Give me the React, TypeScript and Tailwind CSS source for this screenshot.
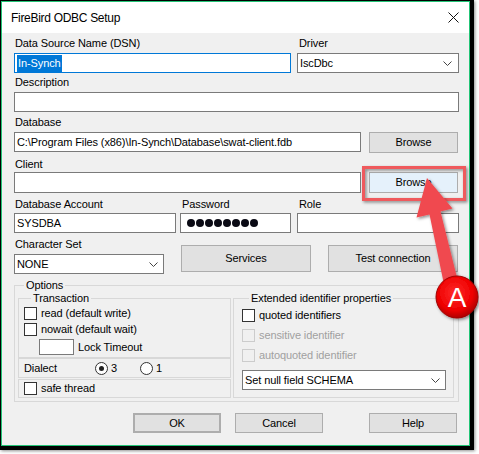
import type { ReactNode } from 'react'

function Chevron() {
  return (
    <svg width="9" height="5" viewBox="0 0 9 5" className="shrink-0">
      <polyline points="0.5,0.5 4.5,4.5 8.5,0.5" fill="none" stroke="#444" strokeWidth="1" />
    </svg>
  )
}

function Label({ children, className = '' }: { children: ReactNode; className?: string }) {
  return <div className={`h-[14px] leading-[14px] whitespace-nowrap ${className}`}>{children}</div>
}

function TextBox({ children, className = '' }: { children?: ReactNode; className?: string }) {
  return (
    <div
      className={`h-[20px] bg-white border border-[#7a7a7a] pl-[2px] flex items-center leading-[14px] whitespace-nowrap overflow-hidden ${className}`}
    >
      {children}
    </div>
  )
}

function Select({ value, className = '' }: { value: string; className?: string }) {
  return (
    <div
      className={`h-[20px] bg-white border border-[#7a7a7a] pl-[2px] pr-[5px] flex items-center justify-between leading-[14px] whitespace-nowrap ${className}`}
    >
      <span>{value}</span>
      <Chevron />
    </div>
  )
}

function Button({ children, className = '' }: { children: ReactNode; className?: string }) {
  return (
    <div
      className={`flex items-center justify-center bg-[#e1e1e1] border border-[#adadad] whitespace-nowrap ${className}`}
    >
      {children}
    </div>
  )
}

function Check({ label, disabled = false }: { label: string; disabled?: boolean }) {
  return (
    <div className="flex items-center h-[15px]">
      <span
        className={
          disabled
            ? 'w-[13px] h-[13px] border border-[#cccccc] bg-[#f0f0f0] shrink-0'
            : 'w-[13px] h-[13px] border border-[#333333] bg-white shrink-0'
        }
      />
      <span className={disabled ? 'ml-[4px] text-[#a0a0a0]' : 'ml-[4px]'}>{label}</span>
    </div>
  )
}

function Radio({ label, checked = false }: { label: string; checked?: boolean }) {
  return (
    <div className="flex items-center w-[45px]">
      <span className="w-[13px] h-[13px] rounded-full border border-[#333333] bg-white flex items-center justify-center shrink-0">
        {checked && <span className="w-[5px] h-[5px] rounded-full bg-[#222]" />}
      </span>
      <span className="ml-[3px]">{label}</span>
    </div>
  )
}

export default function App() {
  return (
    <div className="relative w-[479px] h-[454px] bg-white font-['Liberation_Sans',Arial,sans-serif] text-[11px] tracking-[-0.1px] text-black">
      <div className="w-[474px] h-[450px] border-t border-l border-r-4 border-b-4 border-black shadow-[1px_1px_3px_rgba(0,0,0,0.45)]">
        <div className="h-full border border-[#22c476] bg-[#f0f0f0] flex flex-col">
          {/* title bar */}
          <div className="h-[31px] bg-white flex items-center justify-between pl-[9px] pr-[10px]">
            <span className="text-[12px] tracking-[-0.3px]">FireBird ODBC Setup</span>
            <svg width="11" height="11" viewBox="0 0 11 11">
              <path d="M0.5 0.5 L10.5 10.5 M10.5 0.5 L0.5 10.5" stroke="#111" strokeWidth="1" />
            </svg>
          </div>

          <div className="flex-1 pl-[12px] pr-[10px]">
            {/* DSN + driver */}
            <div className="flex mt-[3px]">
              <div className="w-[277px]">
                <Label className="pl-[1px]">Data Source Name (DSN)</Label>
                <TextBox className="mt-[3px] border-[#0078d7] pl-[1px]">
                  <span className="bg-[#0078d7] text-white px-[1px] leading-[17px]">In-Synch</span>
                </TextBox>
              </div>
              <div className="w-[162px] ml-[6px]">
                <Label className="pl-[2px]">Driver</Label>
                <Select value="IscDbc" className="mt-[3px] pr-[6px]" />
              </div>
            </div>

            <Label className="mt-[2px] pl-[1px]">Description</Label>
            <TextBox className="mt-[3px]" />

            <Label className="mt-[3px] pl-[1px]">Database</Label>
            <div className="flex items-start mt-[3px]">
              <TextBox className="w-[347px]">C:\Program Files (x86)\In-Synch\Database\swat-client.fdb</TextBox>
              <Button className="w-[89px] h-[21px] ml-[8px]">Browse</Button>
            </div>

            <Label className="mt-[4px] pl-[1px]">Client</Label>
            <div className="flex items-start mt-[1px]">
              <TextBox className="w-[347px] h-[21px]" />
              <Button className="w-[89px] h-[21px] ml-[8px] bg-[#e5f1fb] border-[#0078d7]">Browse</Button>
            </div>

            {/* account row */}
            <div className="flex mt-[4px]">
              <div className="w-[162px]">
                <Label className="pl-[1px]">Database Account</Label>
                <TextBox className="mt-[2px]">SYSDBA</TextBox>
              </div>
              <div className="w-[111px] ml-[4px]">
                <Label className="pl-[2px]">Password</Label>
                <TextBox className="mt-[2px] pl-[6px] gap-[1px]">
                  {Array.from({ length: 8 }).map((_, i) => (
                    <span key={i} className="w-[8px] h-[8px] rounded-full bg-[#0a0a14] shrink-0" />
                  ))}
                </TextBox>
              </div>
              <div className="w-[162px] ml-[6px]">
                <Label className="pl-[2px]">Role</Label>
                <TextBox className="mt-[2px]" />
              </div>
            </div>

            {/* character set row */}
            <div className="flex items-start mt-[4px]">
              <div className="w-[150px]">
                <Label className="pl-[1px]">Character Set</Label>
                <Select value="NONE" className="mt-[3px]" />
              </div>
              <Button className="w-[130px] h-[27px] ml-[17px] mt-[8px]">Services</Button>
              <Button className="w-[130px] h-[27px] ml-[17px] mt-[8px]">Test connection</Button>
            </div>

            {/* options */}
            <fieldset className="mt-[4px] h-[124px] border border-[#d8d8d8] px-[3px]">
              <legend className="ml-[6px] px-[2px] h-[14px] leading-[14px]">Options</legend>
              <div className="flex items-start -mt-[1px]">
                <div className="w-[213px]">
                  <fieldset className="h-[67px] border border-[#d8d8d8] pl-[5px]">
                    <legend className="ml-[7px] px-[2px] h-[14px] leading-[14px]">Transaction</legend>
                    <div className="mt-[1px]">
                      <Check label="read (default write)" />
                    </div>
                    <div className="mt-[1px]">
                      <Check label="nowait (default wait)" />
                    </div>
                    <div className="flex items-center mt-[2px] h-[16px]">
                      <span className="w-[35px] h-[16px] ml-[15px] bg-white border border-[#7a7a7a]" />
                      <span className="ml-[4px]">Lock Timeout</span>
                    </div>
                  </fieldset>
                  <div className="h-[20px] border border-[#d8d8d8] flex items-center pl-[5px]">
                    <span className="w-[71px]">Dialect</span>
                    <Radio label="3" checked />
                    <Radio label="1" />
                  </div>
                  <div className="h-[19px] mt-[1px] border border-[#d8d8d8] flex items-center pl-[5px]">
                    <Check label="safe thread" />
                  </div>
                </div>

                <fieldset className="w-[221px] h-[107px] ml-[2px] border border-[#d8d8d8] pl-[8px]">
                  <legend className="ml-[7px] px-[2px] h-[14px] leading-[14px]">Extended identifier properties</legend>
                  <div className="mt-[3px]">
                    <Check label="quoted identifiers" />
                  </div>
                  <div className="mt-[5px]">
                    <Check label="sensitive identifier" disabled />
                  </div>
                  <div className="mt-[5px]">
                    <Check label="autoquoted identifier" disabled />
                  </div>
                  <Select value="Set null field SCHEMA" className="w-[204px] mt-[7px]" />
                </fieldset>
              </div>
            </fieldset>

            {/* bottom buttons */}
            <div className="flex mt-[11px]">
              <Button className="w-[88px] h-[20px] ml-[119px] border-2 border-[#0078d7]">OK</Button>
              <Button className="w-[88px] h-[20px] ml-[14px]">Cancel</Button>
              <Button className="w-[88px] h-[20px] ml-[46px]">Help</Button>
            </div>
          </div>
        </div>
      </div>

      {/* annotation overlay */}
      <svg className="absolute left-0 top-0 pointer-events-none" width="479" height="454" viewBox="0 0 479 454">
        <defs>
          <filter id="sh" x="-20%" y="-20%" width="140%" height="140%">
            <feDropShadow dx="1.5" dy="1.5" stdDeviation="1.5" floodColor="#000" floodOpacity="0.45" />
          </filter>
          <radialGradient id="badge" cx="45%" cy="40%" r="60%">
            <stop offset="0%" stopColor="#ff2a2a" />
            <stop offset="70%" stopColor="#ee0000" />
            <stop offset="100%" stopColor="#b00000" />
          </radialGradient>
        </defs>
        <rect x="363.5" y="167.5" width="101" height="32" fill="none" stroke="#ef5a5d" strokeWidth="3" filter="url(#sh)" />
        <polygon
          points="427,178 452.5,208.5 440.5,211.5 458,281.5 444,284.5 429.5,214.5 416.5,217.5"
          fill="#f04a4f"
          filter="url(#sh)"
        />
        <circle cx="457" cy="297" r="21" fill="url(#badge)" stroke="#a00000" strokeWidth="1" filter="url(#sh)" />
        <text
          x="457"
          y="307"
          textAnchor="middle"
          fill="#fff"
          fontSize="28"
          fontFamily="'Liberation Sans', Arial, sans-serif"
        >
          A
        </text>
      </svg>
    </div>
  )
}
